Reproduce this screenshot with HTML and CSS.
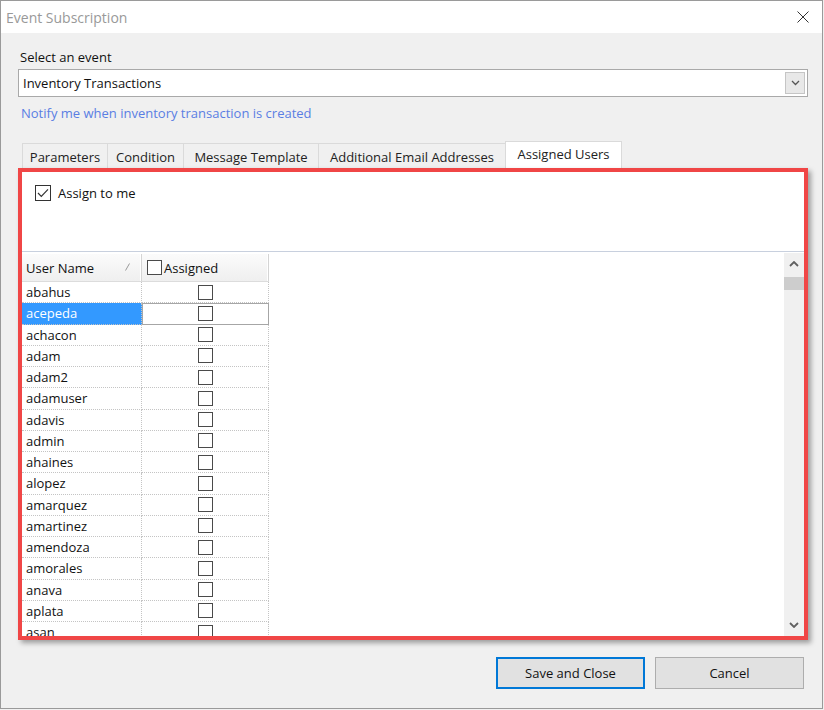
FILE: index.html
```html
<!DOCTYPE html>
<html>
<head>
<meta charset="utf-8">
<title>Event Subscription</title>
<link rel="stylesheet" href="styles.css">
</head>
<body>
<div class="window">
  <div class="titlebar">
    <span class="title">Event Subscription</span>
    <svg class="close" width="12" height="12" viewBox="0 0 12 12"><path d="M0.5 0.5 L11.5 11.5 M11.5 0.5 L0.5 11.5" stroke="#333" stroke-width="1" fill="none"/></svg>
  </div>
  <div class="body">
    <div class="label">Select an event</div>
    <div class="combo">
      <span class="combo-text">Inventory Transactions</span>
      <div class="drop"><svg width="9" height="6" viewBox="0 0 9 6"><path d="M1 1 L4.5 4.5 L8 1" stroke="#555" stroke-width="1.3" fill="none"/></svg></div>
    </div>
    <div class="link">Notify me when inventory transaction is created</div>
    <div class="tabs">
      <div class="tab t1">Parameters</div>
      <div class="tab t2">Condition</div>
      <div class="tab t3">Message Template</div>
      <div class="tab t4">Additional Email Addresses</div>
      <div class="tab t5 active">Assigned Users</div>
    </div>
    <div class="panel">
      <div class="assign">
        <svg class="chk" width="16" height="16" viewBox="0 0 16 16"><rect x="0.5" y="0.5" width="15" height="15" fill="#fff" stroke="#333"/><path d="M3 8 L6.3 11.3 L13 4.3" stroke="#333" stroke-width="1.2" fill="none"/></svg>
        <span class="assign-text">Assign to me</span>
      </div>
      <div class="grid">
        <div class="cols">
          <div class="hdr">
            <div class="hcell hname">User Name<svg class="sort" width="5" height="8" viewBox="0 0 5 8"><path d="M0.5 7.5 L4.5 0.5" stroke="#999" stroke-width="1" fill="none"/></svg></div>
            <div class="hcell hasg"><span class="cb"></span>Assigned</div>
          </div>
          <div class="rows">
            <div class="row"><div class="c cname">abahus</div><div class="c casg"><span class="cb"></span></div></div>
            <div class="row sel"><div class="c cname">acepeda</div><div class="c casg"><span class="cb"></span></div></div>
            <div class="row"><div class="c cname">achacon</div><div class="c casg"><span class="cb"></span></div></div>
            <div class="row"><div class="c cname">adam</div><div class="c casg"><span class="cb"></span></div></div>
            <div class="row"><div class="c cname">adam2</div><div class="c casg"><span class="cb"></span></div></div>
            <div class="row"><div class="c cname">adamuser</div><div class="c casg"><span class="cb"></span></div></div>
            <div class="row"><div class="c cname">adavis</div><div class="c casg"><span class="cb"></span></div></div>
            <div class="row"><div class="c cname">admin</div><div class="c casg"><span class="cb"></span></div></div>
            <div class="row"><div class="c cname">ahaines</div><div class="c casg"><span class="cb"></span></div></div>
            <div class="row"><div class="c cname">alopez</div><div class="c casg"><span class="cb"></span></div></div>
            <div class="row"><div class="c cname">amarquez</div><div class="c casg"><span class="cb"></span></div></div>
            <div class="row"><div class="c cname">amartinez</div><div class="c casg"><span class="cb"></span></div></div>
            <div class="row"><div class="c cname">amendoza</div><div class="c casg"><span class="cb"></span></div></div>
            <div class="row"><div class="c cname">amorales</div><div class="c casg"><span class="cb"></span></div></div>
            <div class="row"><div class="c cname">anava</div><div class="c casg"><span class="cb"></span></div></div>
            <div class="row"><div class="c cname">aplata</div><div class="c casg"><span class="cb"></span></div></div>
            <div class="row"><div class="c cname">asan</div><div class="c casg"><span class="cb"></span></div></div>
          </div>
        </div>
        <div class="filler"></div>
        <div class="vscroll">
          <div class="arrow"><svg width="10" height="6" viewBox="0 0 10 6"><path d="M1 5 L5 1 L9 5" stroke="#606060" stroke-width="1.8" fill="none"/></svg></div>
          <div class="thumb"></div>
          <div class="track"></div>
          <div class="arrow"><svg width="10" height="6" viewBox="0 0 10 6"><path d="M1 1 L5 5 L9 1" stroke="#606060" stroke-width="1.8" fill="none"/></svg></div>
        </div>
      </div>
    </div>
    <div class="buttons">
      <button class="btn primary">Save and Close</button>
      <button class="btn">Cancel</button>
    </div>
  </div>
</div>
</body>
</html>
```
FILE: styles.css
```css
html, body {
  margin: 0;
  padding: 0;
  background: #f0f0f0;
}
body {
  width: 824px;
  height: 710px;
  overflow: hidden;
  font-family: "Open Sans", "Noto Sans", sans-serif;
  font-size: 13px;
  color: #111;
}
.window {
  width: 821px;
  height: 707px;
  border: 1px solid #9a9a9a;
  background: #f0f0f0;
  display: flex;
  flex-direction: column;
}
.titlebar {
  height: 32px;
  flex: none;
  background: #fff;
  display: flex;
  align-items: center;
  justify-content: space-between;
  padding: 0 13px 0 5px;
}
.title {
  font-size: 14px;
  color: #999;
}
.close {
  display: block;
  margin-top: -1px;
}
.body {
  flex: 1;
  display: flex;
  flex-direction: column;
  padding: 16px 14px 0 17px;
}
.label {
  line-height: 16px;
  height: 16px;
  padding-left: 2px;
}
.combo {
  margin-top: 4px;
  height: 28px;
  box-sizing: border-box;
  width: 790px;
  border: 1px solid #a9a9a9;
  background: #fff;
  display: flex;
  align-items: center;
  justify-content: space-between;
  padding: 0 2px 0 4px;
}
.drop {
  width: 20px;
  height: 22px;
  box-sizing: border-box;
  background: #e8e8e8;
  border: 1px solid #c5c5c5;
  display: flex;
  align-items: center;
  justify-content: center;
}
.drop svg { display: block; }
.link {
  margin-top: 8px;
  line-height: 16px;
  height: 16px;
  padding-left: 3px;
  color: #5a7ee3;
}
.tabs {
  margin-top: 20px;
  height: 27px;
  display: flex;
  align-items: flex-end;
  padding-left: 4px;
}
.tab {
  height: 25px;
  box-sizing: border-box;
  border: 1px solid #dadada;
  border-bottom: none;
  border-right: none;
  background: #f0f0f0;
  color: #222;
  display: flex;
  align-items: center;
  justify-content: center;
  line-height: 16px;
  padding-top: 1px;
}
.t1 { width: 85px; }
.t2 { width: 76px; }
.t3 { width: 135px; }
.t4 { width: 187px; }
.t5 {
  width: 117px;
  height: 27px;
  border-right: 1px solid #dadada;
  background: #fff;
  padding-top: 0;
  padding-bottom: 3px;
}
.panel {
  width: 790px;
  height: 472px;
  box-sizing: border-box;
  border: 4px solid #f04646;
  background: #fff;
  box-shadow: 3px 3px 5px rgba(0, 0, 0, 0.35);
  display: flex;
  flex-direction: column;
}
.assign {
  height: 79px;
  flex: none;
  box-sizing: border-box;
  padding: 13px 0 0 13px;
  display: flex;
  align-items: flex-start;
  gap: 7px;
}
.chk { display: block; flex: none; }
.assign-text {
  line-height: 16px;
}
.grid {
  flex: 1;
  min-height: 0;
  border-top: 1px solid #c8d0de;
  display: flex;
}
.cols {
  width: 247px;
  flex: none;
  display: flex;
  flex-direction: column;
  padding-top: 2px;
}
.hdr {
  height: 28px;
  flex: none;
  display: flex;
  background: linear-gradient(#fbfbfb, #efefef);
  border-bottom: 1px solid #dcdcdc;
  box-sizing: border-box;
}
.hcell {
  display: flex;
  align-items: center;
  box-sizing: border-box;
  border-right: 1px solid #d4d4d4;
  box-shadow: inset -1px 0 0 #fff;
}
.hname {
  width: 120px;
  padding-left: 4px;
  position: relative;
}
.sort {
  position: absolute;
  right: 11px;
  top: 9px;
}
.hasg {
  width: 127px;
  padding-left: 5px;
}
.hasg .cb {
  margin-right: 2px;
}
.rows {
  flex: 1;
  overflow: hidden;
}
.row {
  height: 21.25px;
  display: flex;
}
.c {
  box-sizing: border-box;
  border-right: 1px dotted #c4c4c4;
  border-bottom: 1px dotted #c4c4c4;
  display: flex;
  align-items: center;
}
.cname {
  width: 120px;
  padding-left: 4px;
}
.casg {
  width: 127px;
  justify-content: center;
}
.sel .cname {
  background: #3399ff;
  color: #fff;
}
.sel .casg {
  border: 1px solid #a6a6a6;
}
.cb {
  display: inline-block;
  width: 15px;
  height: 15px;
  box-sizing: border-box;
  border: 1px solid #4a4a4a;
  background: #fff;
  flex: none;
}
.filler {
  flex: 1;
}
.vscroll {
  width: 20px;
  flex: none;
  background: #f0f0f0;
  display: flex;
  flex-direction: column;
  margin-top: 1px;
}
.arrow {
  height: 22px;
  flex: none;
  display: flex;
  align-items: center;
  justify-content: center;
}
.arrow svg { display: block; }
.thumb {
  height: 13px;
  flex: none;
  margin-top: 2px;
  background: #cdcdcd;
}
.track {
  flex: 1;
}
.buttons {
  margin-top: 17px;
  display: flex;
  justify-content: flex-end;
  gap: 10px;
  padding-right: 4px;
}
.btn {
  width: 149px;
  height: 32px;
  box-sizing: border-box;
  background: #e1e1e1;
  border: 1px solid #adadad;
  font-family: "Open Sans", "Noto Sans", sans-serif;
  font-size: 13px;
  color: #111;
  padding: 0;
  margin: 0;
}
.btn.primary {
  border: 2px solid #0078d7;
}
```
